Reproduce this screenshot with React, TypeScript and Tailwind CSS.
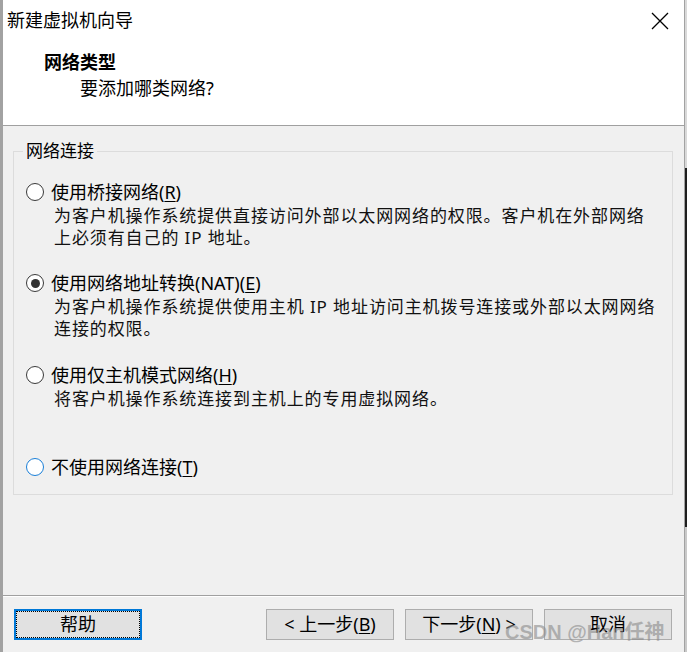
import React from 'react';

const FONT = '"Noto Sans", "Noto Sans CJK SC", sans-serif';

const Mn: React.FC<{ k: string }> = ({ k }) => (
  <>
    (<span className="underline underline-offset-2">{k}</span>)
  </>
);

interface OptionProps {
  label: React.ReactNode;
  desc?: React.ReactNode[];
  checked?: boolean;
  focused?: boolean;
  className?: string;
}

const Radio: React.FC<{ checked?: boolean; focused?: boolean }> = ({ checked, focused }) => (
  <span
    className={`w-[18px] h-[18px] rounded-full bg-white flex items-center justify-center shrink-0 ${
      focused ? 'border-[1.5px] border-[#1a7fd8]' : 'border-[1.5px] border-[#3a3a3a]'
    }`}
  >
    {checked && <span className="w-[9px] h-[9px] rounded-full bg-[#333333]" />}
  </span>
);

const Option: React.FC<OptionProps> = ({ label, desc, checked, focused, className }) => (
  <div className={className}>
    <div className="flex items-center h-[22px] gap-[7px]">
      <Radio checked={checked} focused={focused} />
      <span className="text-[18px] leading-[22px] text-black">{label}</span>
    </div>
    {desc && (
      <div className="mt-[2px] ml-[28px] text-[17px] leading-[22px] tracking-[0.9px] text-[#111]">
        {desc.map((d, i) => (
          <div key={i}>{d}</div>
        ))}
      </div>
    )}
  </div>
);

const Button: React.FC<{ children: React.ReactNode; primary?: boolean }> = ({ children, primary }) => (
  <button
    className={`w-[128px] h-[31px] bg-[#e1e1e1] text-[18px] text-black flex items-center justify-center ${
      primary ? 'border-2 border-[#0078d7]' : 'border border-[#adadad]'
    }`}
  >
    {primary ? (
      <span className="w-full h-full border border-dotted border-black flex items-center justify-center">
        {children}
      </span>
    ) : (
      children
    )}
  </button>
);

export default function App() {
  return (
    <div className="w-[687px] h-[652px] flex bg-[#f0f0f0] relative overflow-hidden" style={{ fontFamily: FONT }}>
      <div className="w-[685px] h-full flex flex-col border-l-[3px] border-r border-[#a2a2a2]">
        {/* header */}
        <div className="h-[126px] bg-white border-b border-[#a0a0a0] shrink-0">
          <div className="h-[41px] flex items-center justify-between pl-[4px] pr-[15px]">
            <span className="text-[18px] text-black">新建虚拟机向导</span>
            <svg width="18" height="18" viewBox="0 0 18 18" className="text-black">
              <path d="M1 1 L17 17 M17 1 L1 17" stroke="currentColor" strokeWidth="1.3" />
            </svg>
          </div>
          <div className="pl-[41px] mt-[8px] text-[18px] leading-[26px] font-bold text-black">网络类型</div>
          <div className="pl-[77px] text-[18px] leading-[26px] text-black">要添加哪类网络?</div>
        </div>

        {/* body */}
        <div className="flex-1 flex flex-col">
          <fieldset className="ml-[10px] mt-[14px] w-[660px] border border-[#dcdcdc] pl-[12px] pt-[19px] pb-[16px]">
            <legend className="ml-[-3px] px-[3px] text-[17px] leading-[22px] text-black">网络连接</legend>
            <Option
              label={<>使用桥接网络<Mn k="R" /></>}
              desc={['为客户机操作系统提供直接访问外部以太网网络的权限。客户机在外部网络', '上必须有自己的 IP 地址。']}
            />
            <Option
              className="mt-[23px]"
              checked
              label={<>使用网络地址转换(NAT)<Mn k="E" /></>}
              desc={['为客户机操作系统提供使用主机 IP 地址访问主机拨号连接或外部以太网网络', '连接的权限。']}
            />
            <Option
              className="mt-[24px]"
              label={<>使用仅主机模式网络<Mn k="H" /></>}
              desc={['将客户机操作系统连接到主机上的专用虚拟网络。']}
            />
            <Option className="mt-[46px]" focused label={<>不使用网络连接<Mn k="T" /></>} />
          </fieldset>

          <div className="mt-[100px] border-t border-[#a0a0a0]" />
          <div className="border-t border-white" />

          <div className="mt-[12px] flex justify-between pl-[11px] pr-[12px]">
            <Button primary>帮助</Button>
            <div className="flex gap-[11px]">
              <Button>
                &lt; 上一步<Mn k="B" />
              </Button>
              <Button>
                下一步<Mn k="N" /> &gt;
              </Button>
              <Button>取消</Button>
            </div>
          </div>
        </div>
      </div>

      {/* strip beyond the window edge */}
      <div className="w-[2px] h-full flex flex-col">
        <div className="h-[168px] bg-[#d9d9d9]" />
        <div className="h-[359px] bg-[#1e1e1e]" />
        <div className="flex-1 bg-[#c9c9c9]" />
      </div>

      <span
        className="absolute left-[505px] top-[619px] text-[20px] leading-[26px] font-bold text-[#8a8a8a]/60 pointer-events-none"
        style={{ fontFamily: '"Liberation Sans", "Noto Sans CJK SC", sans-serif' }}
      >
        CSDN @Han任神
      </span>
    </div>
  );
}
